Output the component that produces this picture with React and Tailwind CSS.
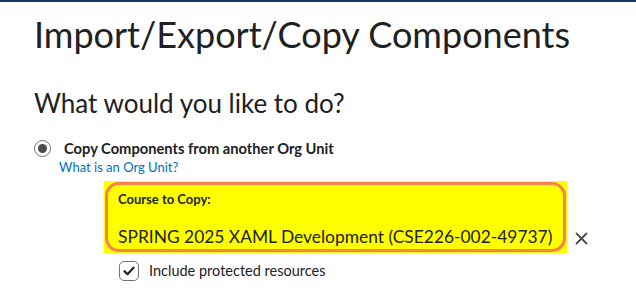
import React from "react";

const font = { fontFamily: "Lato, 'Noto Sans', sans-serif" };

const App = () => {
  return (
    <div
      className="h-[295px] w-[636px] overflow-hidden border-t-2 border-[#1b3768] bg-white text-[#202122]"
      style={font}
    >
      <div className="pl-[34px]">
        {/* page title */}
        <h1 className="mt-[9px] text-[36px] leading-[46px] font-normal">
          Import/Export/Copy Components
        </h1>

        <h2 className="mt-[30px] text-[26px] leading-[32px] font-normal">
          What would you like to do?
        </h2>

        {/* radio option */}
        <div className="mt-[19px] flex items-start">
          <div className="mt-[2px] flex h-[17px] w-[17px] items-center justify-center rounded-full border border-[#6e7376] bg-white">
            <div className="h-[9px] w-[9px] rounded-full bg-[#494c4e]" />
          </div>
          <div className="ml-[13px] text-[14.7px] leading-[20px] font-bold">
            Copy Components from another Org Unit
          </div>
        </div>
        <div className="mt-[1px] ml-[25px] text-[13px] leading-[16px] text-[#006fbf]">
          What is an Org Unit?
        </div>

        {/* selected course */}
        <div className="mt-[6px] ml-[70px] flex items-end">
          <div className="h-[72px] w-[463px] bg-[#ffff00] p-[1px]">
            <div className="h-full w-full rounded-[14px] border-[3px] border-[#f8834c] pt-[6px] pl-[10px]">
              <div className="text-[13px] leading-[16px] font-bold">
                Course to Copy:
              </div>
              <div className="mt-[19px] text-[17.4px] leading-[22px]">
                SPRING 2025 XAML Development (CSE226-002-49737)
              </div>
            </div>
          </div>
          <svg
            className="mb-[8px] ml-[8px]"
            width="13"
            height="13"
            viewBox="0 0 13 13"
            fill="none"
            stroke="#494c4e"
            strokeWidth="1.8"
            strokeLinecap="round"
          >
            <path d="M1.5 1.5l10 10M11.5 1.5l-10 10" />
          </svg>
        </div>

        {/* checkbox */}
        <div className="mt-[8px] ml-[85px] flex items-center">
          <div className="flex h-[20px] w-[20px] items-center justify-center rounded-[5px] border border-[#6e7376] bg-white">
            <svg width="12" height="10" viewBox="0 0 12 10" fill="none">
              <path
                d="M1.5 5.2l3 3 6-6.5"
                stroke="#202122"
                strokeWidth="2.2"
                strokeLinecap="round"
                strokeLinejoin="round"
              />
            </svg>
          </div>
          <span className="ml-[10px] text-[14.5px] leading-[20px] text-[#202122]">
            Include protected resources
          </span>
        </div>
      </div>
    </div>
  );
};

export default App;
